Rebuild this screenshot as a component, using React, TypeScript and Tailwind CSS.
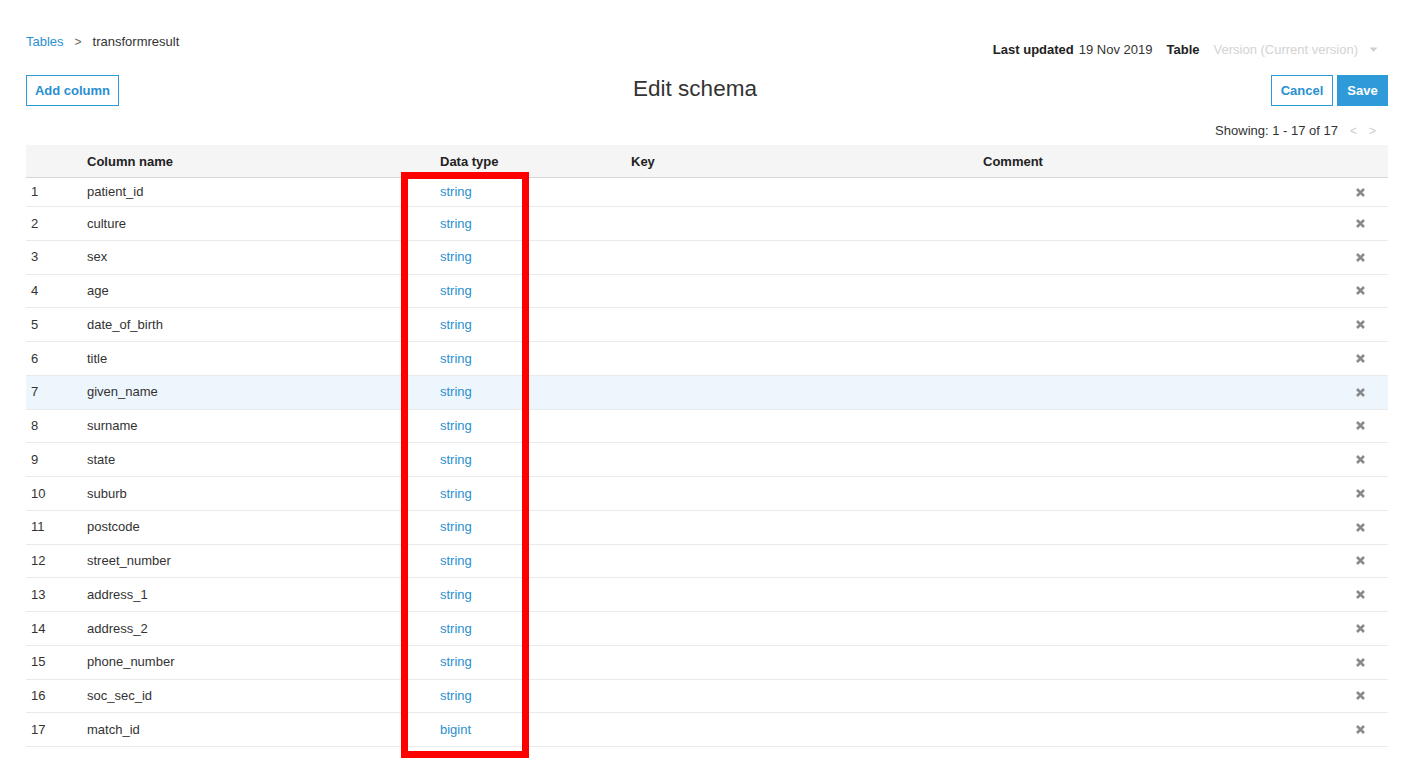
import React from "react";

const rows: [string, string][] = [
  ["patient_id", "string"],
  ["culture", "string"],
  ["sex", "string"],
  ["age", "string"],
  ["date_of_birth", "string"],
  ["title", "string"],
  ["given_name", "string"],
  ["surname", "string"],
  ["state", "string"],
  ["suburb", "string"],
  ["postcode", "string"],
  ["street_number", "string"],
  ["address_1", "string"],
  ["address_2", "string"],
  ["phone_number", "string"],
  ["soc_sec_id", "string"],
  ["match_id", "bigint"],
];

function XIcon() {
  return (
    <svg width="11" height="11" viewBox="0 0 11 11">
      <path d="M2 2 L9 9 M9 2 L2 9" stroke="#8a8a8a" strokeWidth="2.6" strokeLinecap="butt" />
    </svg>
  );
}

export default function App() {
  return (
    <div
      className="relative w-[1420px] h-[774px] bg-white text-[13px] text-[#333] pl-[26px] pr-[32px] overflow-hidden"
      style={{ fontFamily: '"Liberation Sans", Arial, Helvetica, sans-serif' }}
    >
      {/* Top bar */}
      <div className="flex items-start justify-between pt-[33px]">
        <div className="flex items-center h-[18px]">
          <span className="text-[#2a8fd0]">Tables</span>
          <span className="ml-[11px] text-[#666] text-[12px]">&gt;</span>
          <span className="ml-[11px] text-[#333]">transformresult</span>
        </div>
        <div className="flex items-center h-[18px] mt-[8px] mr-[10px]">
          <span className="font-bold text-[#222]">Last updated</span>
          <span className="ml-[5px] text-[#333]">19 Nov 2019</span>
          <span className="ml-[14px] font-bold text-[#222]">Table</span>
          <span className="ml-[14px] text-[#d3d3d3]">Version (Current version)</span>
          <svg className="ml-[11px]" width="9" height="6" viewBox="0 0 9 6">
            <path d="M0.5 0.5 L8.5 0.5 L4.5 5 Z" fill="#d0d0d0" />
          </svg>
        </div>
      </div>

      {/* Title row */}
      <div className="flex items-center justify-between mt-[16px] h-[31px]">
        <button className="h-[31px] w-[93px] border border-[#2e9ad8] text-[#2a8fd0] font-bold text-[13px] bg-white">
          Add column
        </button>
        <div className="text-[22.5px] text-[#333] -mt-[4px]">Edit schema</div>
        <div className="flex items-center gap-[4px]">
          <button className="h-[31px] w-[62px] border border-[#2e9ad8] text-[#2a8fd0] font-bold text-[13px] bg-white">
            Cancel
          </button>
          <button className="h-[31px] w-[51px] bg-[#2e9ad8] text-white font-bold text-[13px]">
            Save
          </button>
        </div>
      </div>

      {/* Showing */}
      <div className="flex items-center justify-end h-[18px] mt-[16px]">
        <span className="text-[#333]">Showing: 1 - 17 of 17</span>
        <span className="ml-[12px] text-[#ccc] text-[12px]">&lt;</span>
        <span className="ml-[12px] mr-[12px] text-[#ccc] text-[12px]">&gt;</span>
      </div>

      {/* Table */}
      <div className="mt-[5px]">
        <div className="grid grid-cols-[61px_353px_191px_352px_1fr_56px] items-center h-[33px] pt-[2px] bg-[#f5f5f5] border-b border-[#d6d6d6] font-bold text-[#222]">
          <div />
          <div>Column name</div>
          <div>Data type</div>
          <div>Key</div>
          <div>Comment</div>
          <div />
        </div>
        {rows.map(([name, type], i) => (
          <div
            key={name}
            className={`grid grid-cols-[61px_353px_191px_352px_1fr_56px] items-center border-b border-[#eaeaea] ${
              i === 0 ? "h-[29px]" : "h-[33.75px]"
            } ${i === 6 ? "bg-[#eef6fd]" : "bg-white"}`}
          >
            <div className="pl-[5px]">{i + 1}</div>
            <div>{name}</div>
            <div className="text-[#2a8fd0]">{type}</div>
            <div />
            <div />
            <div className="flex justify-center">
              <XIcon />
            </div>
          </div>
        ))}
      </div>

      {/* Red annotation box */}
      <div className="absolute left-[401px] top-[172px] w-[128px] h-[586px] border-[7px] border-[#ff0000] pointer-events-none" />
    </div>
  );
}
